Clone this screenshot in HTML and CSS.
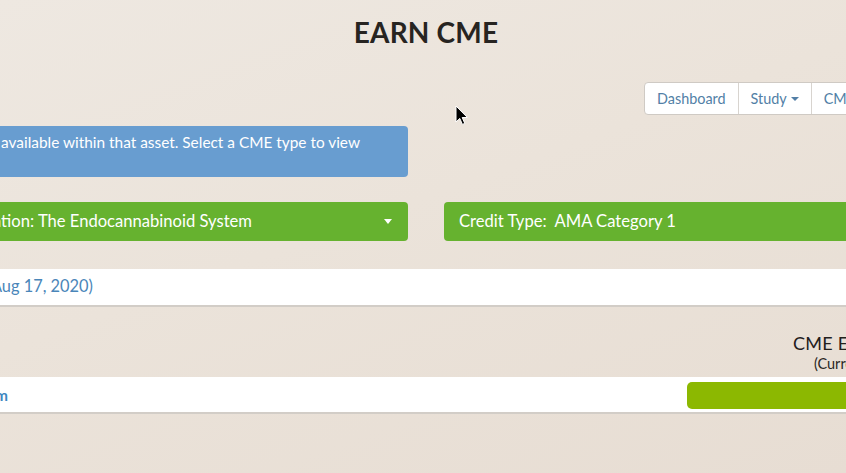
FILE: index.html
```html
<!DOCTYPE html>
<html lang="en">
<head>
<meta charset="utf-8">
<title>Earn CME</title>
<link rel="stylesheet" href="styles.css">
</head>
<body>
<div class="page">
  <h1 class="title">EARN CME</h1>

  <div class="nav-row">
    <nav class="btn-group">
      <a class="btn">Dashboard</a>
      <a class="btn">Study <span class="caret"></span></a>
      <a class="btn">CME</a>
      <a class="btn">Profile</a>
    </nav>
  </div>

  <div class="cols">
    <div class="alert">
      <div class="end-clip alert-line"><span class="nowrap">Select an asset below to see the CME types available within that asset. Select a CME type to view</span></div>
    </div>
    <div></div>
  </div>

  <div class="cols selects">
    <div class="select">
      <div class="end-clip select-line"><span class="nowrap">Presentation: The Endocannabinoid System</span></div>
      <span class="select-caret"></span>
    </div>
    <div class="select">
      <span class="nowrap">Credit Type:&nbsp; AMA Category 1</span>
    </div>
  </div>

  <div class="bar">
    <div class="end-clip bar-line"><span class="nowrap">Release Date (Aug 17, 2020)</span></div>
  </div>

  <div class="table">
    <div class="thead">
      <div></div>
      <div class="th">
        <span class="th-main">CME Earned</span>
        <span class="th-sub">(Current)</span>
      </div>
    </div>
    <div class="row">
      <div class="cell">
        <div class="end-clip row-line"><a class="row-link nowrap">The Endocannabinoid System</a></div>
      </div>
      <div class="cell">
        <div class="lime"></div>
      </div>
    </div>
  </div>
</div>

<svg class="cursor" width="14" height="21" viewBox="0 0 14 21" aria-hidden="true">
  <path d="M1 1 L1 17 L4.8 13.4 L7.4 19.4 L9.8 18.4 L7.2 12.5 L12.4 12.5 Z" fill="#000" stroke="#fff" stroke-width="1" stroke-linejoin="round"/>
</svg>
</body>
</html>
```

FILE: styles.css
```css
html, body {
  margin: 0;
  height: 473px;
  overflow: hidden;
}

body {
  position: relative;
  font-family: Lato, "Open Sans", sans-serif;
  background: linear-gradient(160deg, #eee8e1 0%, #ebe3da 45%, #e7ddd3 100%);
  color: #2a2724;
}

.page {
  margin-left: -20px;
  width: 892px;
}

.nowrap {
  white-space: nowrap;
  flex-shrink: 0;
}

.end-clip {
  display: flex;
  justify-content: flex-end;
  align-items: center;
}

.title {
  margin: 0;
  padding-top: 15px;
  font-size: 28px;
  line-height: 34px;
  font-weight: 700;
  text-align: center;
  color: #272421;
  letter-spacing: 0.2px;
}

.nav-row {
  display: flex;
  margin-top: 33px;
  padding-left: 664px;
}

.btn-group {
  display: flex;
  flex-shrink: 0;
  background: #fff;
  border: 1px solid #cfcac4;
  border-radius: 4px;
  height: 31px;
}

.btn {
  display: flex;
  align-items: center;
  padding: 0 12px;
  font-size: 14.4px;
  color: #527fa6;
  white-space: nowrap;
}

.btn + .btn {
  border-left: 1px solid #d8d4cf;
}

.caret {
  display: inline-block;
  margin-left: 4px;
  width: 0;
  height: 0;
  border-left: 4.5px solid transparent;
  border-right: 4.5px solid transparent;
  border-top: 4.5px solid #527fa6;
}

.cols {
  display: grid;
  grid-template-columns: 428px 428px;
  column-gap: 36px;
}

.alert {
  margin-top: 11px;
  height: 51px;
  box-sizing: border-box;
  padding: 6px 15px;
  background: #689dd0;
  border-radius: 4px;
  color: #fff;
  font-size: 15.4px;
  line-height: 20px;
}

.alert-line {
  width: 365px;
}

.selects {
  margin-top: 25px;
}

.select {
  display: flex;
  align-items: center;
  justify-content: space-between;
  height: 39px;
  box-sizing: border-box;
  padding: 0 15px 1px;
  background: #66b22f;
  border-radius: 4px;
  color: #fff;
  font-size: 16.6px;
}

.select-line {
  width: 257px;
}

.select-caret {
  width: 0;
  height: 0;
  border-left: 4.5px solid transparent;
  border-right: 4.5px solid transparent;
  border-top: 5px solid #fff;
  margin-right: 1px;
}

.bar {
  display: flex;
  align-items: center;
  margin-top: 28px;
  height: 36px;
  box-sizing: border-box;
  padding-bottom: 3px;
  background: #fff;
  box-shadow: 0 2px 0 #d2cdc7;
  color: #4a86b9;
  font-size: 16.4px;
}

.bar-line {
  width: 113px;
}

.table {
  margin-top: 29px;
}

.thead {
  display: grid;
  grid-template-columns: 707px 306px;
}

.th {
  display: flex;
  flex-direction: column;
  align-items: center;
  text-align: center;
  padding-left: 8px;
}

.th-main {
  font-size: 18px;
  line-height: 18px;
  letter-spacing: 0.3px;
  color: #23201d;
}

.th-sub {
  font-size: 14.5px;
  line-height: 16px;
  margin-top: 4px;
  margin-right: 4px;
  color: #2a2724;
}

.row {
  display: grid;
  grid-template-columns: 707px 306px;
  margin-top: 5px;
  height: 35px;
  background: #fff;
  box-shadow: 0 2px 0 #d2cdc7;
}

.cell {
  display: flex;
  align-items: center;
}

.row-line {
  width: 28px;
}

.row-link {
  font-size: 15.5px;
  font-weight: 700;
  color: #3f89c1;
}

.lime {
  width: 100%;
  height: 27px;
  margin-top: 1px;
  background: #8cb801;
  border-radius: 5px 0 0 5px;
}

.cursor {
  position: absolute;
  left: 455px;
  top: 105px;
}
```
